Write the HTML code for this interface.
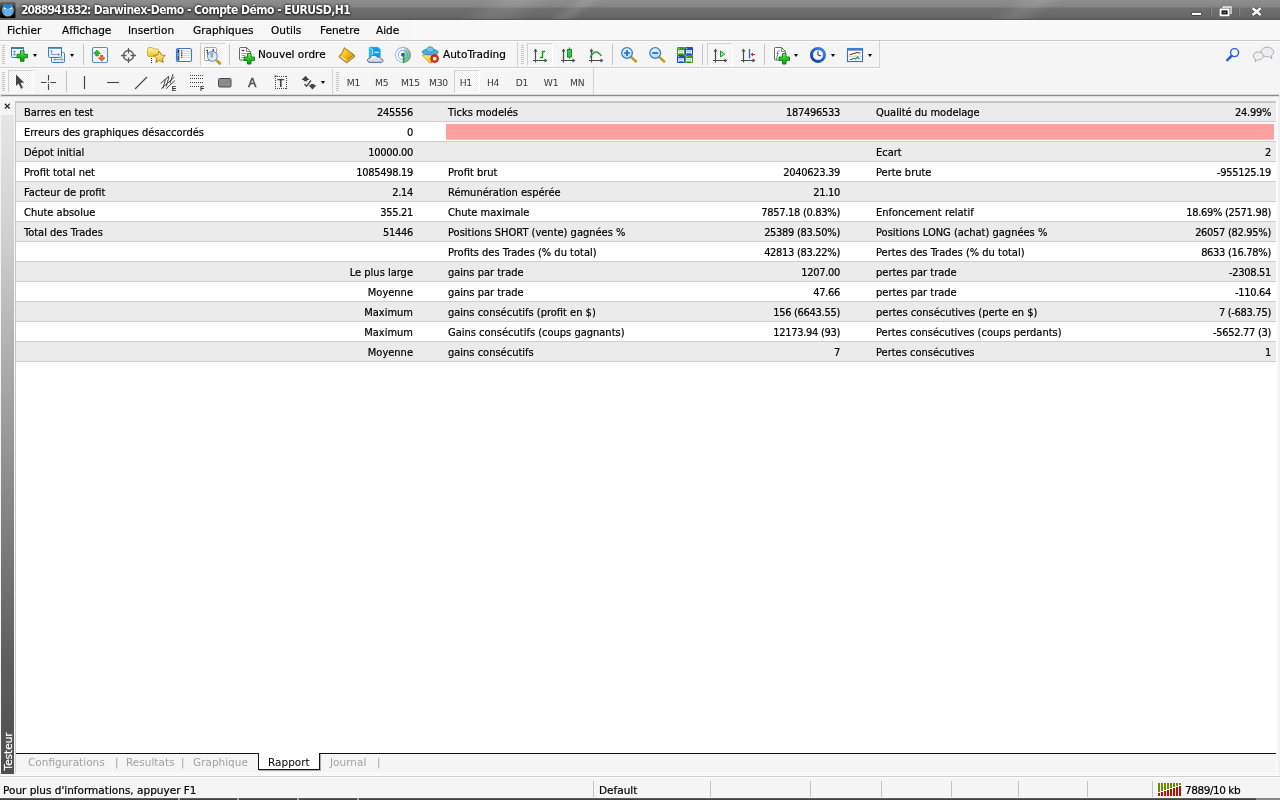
<!DOCTYPE html>
<html><head><meta charset="utf-8"><title>2088941832: Darwinex-Demo - Compte Démo - EURUSD,H1</title>
<style>
*{margin:0;padding:0;box-sizing:border-box}
html,body{width:1280px;height:800px;overflow:hidden;background:#f5f5f5}
body{position:relative;-webkit-text-stroke:.2px currentColor;font-family:"DejaVu Sans Condensed","Liberation Sans",sans-serif;font-size:11px;color:#000}
.abs{position:absolute}
#title{left:0;top:0;width:1280px;height:20px;background:linear-gradient(#8e8e8e 0,#848484 7px,#6f7071 8px,#65666a 18px,#58595a 19px,#58595a 20px)}
.streak{position:absolute;top:0;height:19px;transform:skewX(-55deg);background:linear-gradient(90deg,rgba(255,255,255,0),rgba(255,255,255,.09) 40%,rgba(255,255,255,.09) 60%,rgba(255,255,255,0))}
#title .t{left:21px;top:3px;color:#fff;-webkit-text-stroke:0;font-weight:bold;font-size:12px;letter-spacing:-.62px;text-shadow:0 0 2px #222,0 1px 2px #222,0 0 3px #333;line-height:15px;white-space:pre;font-family:"DejaVu Sans Condensed","Liberation Sans",sans-serif}
#menu{left:0;top:20px;width:1280px;height:20px;background:#f6f6f6}
#menu span{position:absolute;top:3px;line-height:14px;font-family:"DejaVu Sans","Liberation Sans",sans-serif;font-size:10.5px;white-space:pre}
.hl{position:absolute;left:0;width:1280px;height:1px}
.sep{position:absolute;width:1px;background:#c4c4c4}
.grip{position:absolute;width:4px;background:repeating-linear-gradient(#c6c6c6 0,#c6c6c6 1px,transparent 1px,transparent 2px)}
.pressed{position:absolute;background:conic-gradient(#fff 25%,#efefef 0 50%,#fff 0 75%,#efefef 0) 0 0/2px 2px;border:1px solid #fff;border-top-color:#d4d4d4;border-left-color:#cfcfcf}
.dd{position:absolute;width:0;height:0;border-left:2.750px solid transparent;border-right:2.750px solid transparent;border-top:3.200px solid #000}
.tbt{position:absolute;font-family:"DejaVu Sans","Liberation Sans",sans-serif;font-size:10.5px;line-height:14px;white-space:pre;color:#000}
.tf{position:absolute;top:76px;font-family:"DejaVu Sans","Liberation Sans",sans-serif;font-size:9.2px;line-height:14px;color:#383838;white-space:pre;-webkit-text-stroke:0;letter-spacing:-.25px}
#panel{left:0;top:97px;width:1280px;height:677px;background:#f5f5f5}
#strip{left:1px;top:115px;width:13px;height:659px;background:linear-gradient(#e6e6e6 0,#cfcfcf 19%,#a8a8a8 40%,#828282 61.500%,#5e5e5e 82.700%,#4e4e4e 100%)}
#tbl{left:15px;top:101px;width:1261px;height:652px;background:#fff;border-left:1px solid #c8c8c8;border-top:1px solid #c4c4c4}
.row{position:absolute;left:0;width:1260px;height:20px;border-bottom:1px solid #cdcdcd}
.row.g{background:#ebebeb}
.row span{position:absolute;top:4px;line-height:14px;white-space:pre}
.n{letter-spacing:-.3px}
.l1{left:8px}.r1{right:863px}.l2{left:432px}.r2{right:436px}.l3{left:860px}.r3{right:5px}
#tabs{left:16px;top:753px;width:1264px;height:21px}
#tabs span{position:absolute;top:2px;line-height:14px;font-family:"DejaVu Sans","Liberation Sans",sans-serif;font-size:10.5px;color:#a2a2a2;white-space:pre;-webkit-text-stroke:0}
#status span{position:absolute;top:783px;line-height:14px;font-family:"DejaVu Sans","Liberation Sans",sans-serif;font-size:10.5px;white-space:pre}
#root{position:absolute;left:0;top:0;width:1280px;height:800px;will-change:transform;overflow:hidden}
</style></head><body><div id="root">
<div id="title" class="abs"><div class="streak" style="left:470px;width:70px"></div><div class="streak" style="left:560px;width:30px"></div><div class="streak" style="left:1000px;width:50px"></div><span class="abs t"><span style="letter-spacing:-.9px">2088941832:</span><span style="letter-spacing:-.52px"> Darwinex-Demo - Compte Démo - EURUSD,H1</span></span><svg class="abs" style="left:0;top:0" width="20" height="20" viewBox="0 0 20 20"><defs><linearGradient id="ib" x1="0" y1="0" x2="0" y2="1"><stop offset="0" stop-color="#666"/><stop offset=".5" stop-color="#222"/><stop offset="1" stop-color="#000"/></linearGradient></defs>
<rect x="0" y="2" width="15.500" height="16" rx="1.500" fill="url(#ib)"/>
<path d="M4 3.200l1.800 1.600h4.200l1.800-1.600.5 3q1.600 2 1.300 5q-.3 3.500-3.300 4.800l-.8.700-.8-.6-.8.600-.8-.6-.8.600-.8-.700q-3-1.300-3.300-4.800q-.3-3 1.300-5z" fill="#6cb2e4"/>
<path d="M4 3.200l1.800 1.600h4.200l1.800-1.600.6 3.500q-1.500 1.200-2.800 1.500l-1.700.8-1.700-.8q-1.300-.3-2.800-1.500z" fill="#1f84d6"/>
<path d="M3.800 7.200l3 1.500-2.600.3zM12 7.200l-3 1.500 2.600.3z" fill="#fff"/><path d="M3 10.500q.5 2.500 1.800 3q-.3-2-1.800-3zM12.800 10.500q-.5 2.500-1.800 3q.3-2 1.800-3z" fill="#1f84d6"/>
</svg>
<svg class="abs" style="left:1180px;top:0" width="100" height="20" viewBox="1180 0 100 20">
<rect x="1191.600" y="12.300" width="10" height="3.200" rx=".6" fill="#fff" stroke="#333" stroke-width=".9"/>
<path d="M1210.800 6.500v9M1238.800 6.500v9" stroke="#585858" stroke-width=".8"/><path d="M1211.600 6.500v9M1239.600 6.500v9" stroke="#909090" stroke-width=".8"/>
<rect x="1223.400" y="7.100" width="7.500" height="6.200" fill="#3a3a3a" stroke="#f2f2f2" stroke-width="1.500"/><rect x="1219" y="8" width="11.200" height="9" fill="#3a3a3a"/>
<rect x="1220.500" y="9.400" width="8.100" height="6" fill="#1a1a1a" stroke="#fff" stroke-width="2"/><rect x="1223.300" y="12" width="2.600" height="1" fill="#8a8a8a"/>
<path d="M1252.600 8.200l8 6.800M1260.600 8.200l-8 6.800" stroke="#3a3a3a" stroke-width="4" stroke-opacity=".85"/><path d="M1252.600 8.200l8 6.800M1260.600 8.200l-8 6.800" stroke="#fff" stroke-width="2.600"/>
</svg></div>
<div id="menu" class="abs">
<span style="left:7px">Fichier</span><span style="left:62px">Affichage</span><span style="left:128px">Insertion</span><span style="left:193px">Graphiques</span><span style="left:271px">Outils</span><span style="left:320px">Fenetre</span><span style="left:376px">Aide</span>
</div>
<div class="hl" style="top:20px;background:#fdfdfd"></div><div class="abs" style="left:411px;top:21px;width:869px;height:19px;background:#f8f8f8"></div><div class="hl" style="top:40px;background:#cacaca"></div><div class="hl" style="top:41px;background:#fdfdfd"></div>
<div class="hl" style="top:67px;width:880px;background:#d2d2d2"></div><div class="hl" style="top:68px;width:880px;background:#fdfdfd"></div>
<div class="hl" style="top:94px;background:#dadada"></div><div class="hl" style="top:95px;left:1px;width:1278px;background:#8c8c8c"></div>
<div class="hl" style="top:96px;background:#dedede"></div>
<!--TB1S-->
<div class="grip" style="left:2px;top:45px;height:20px;width:3px"></div>
<div class="grip" style="left:521px;top:45px;height:20px;width:3px"></div>
<div class="sep" style="left:83px;top:44px;height:21px"></div>
<div class="sep" style="left:229px;top:44px;height:21px"></div>
<div class="sep" style="left:517px;top:42px;height:25px;background:#d4d4d4"></div>
<div class="sep" style="left:612px;top:44px;height:21px"></div>
<div class="sep" style="left:702px;top:44px;height:21px"></div>
<div class="sep" style="left:764px;top:44px;height:21px"></div>
<div class="sep" style="left:879px;top:41px;height:27px;background:#d4d4d4"></div>
<div class="pressed" style="left:200px;top:43px;width:26px;height:23px"></div>
<div class="pressed" style="left:527px;top:43px;width:26px;height:23px"></div>
<div class="pressed" style="left:707px;top:43px;width:26px;height:23px"></div>
<div class="dd" style="left:33px;top:54px"></div><div class="dd" style="left:70px;top:54px"></div>
<div class="dd" style="left:794px;top:54px"></div><div class="dd" style="left:831px;top:54px"></div><div class="dd" style="left:868px;top:54px"></div>
<span class="tbt" style="left:258px;top:47px">Nouvel ordre</span>
<span class="tbt" style="left:443px;top:47px">AutoTrading</span>
<svg class="abs" style="left:0;top:40px" width="1280" height="28" viewBox="0 40 1280 28">
<defs>
<linearGradient id="gG" x1="0" y1="0" x2="0" y2="1"><stop offset="0" stop-color="#7df07d"/><stop offset=".5" stop-color="#22c522"/><stop offset="1" stop-color="#0c9a0c"/></linearGradient>
<linearGradient id="gY" x1="0" y1="0" x2="0" y2="1"><stop offset="0" stop-color="#fff6b0"/><stop offset="1" stop-color="#f0c030"/></linearGradient>
<linearGradient id="gGold" x1="0" y1="0" x2="1" y2="1"><stop offset="0" stop-color="#ffe870"/><stop offset=".45" stop-color="#f2c420"/><stop offset="1" stop-color="#c8840a"/></linearGradient>
<linearGradient id="gW" x1="0" y1="0" x2="0" y2="1"><stop offset="0" stop-color="#ffffff"/><stop offset="1" stop-color="#dfeaf6"/></linearGradient>
<linearGradient id="gLens" x1="0" y1="0" x2="0" y2="1"><stop offset="0" stop-color="#e6f3fc"/><stop offset="1" stop-color="#b8d8f2"/></linearGradient>
<linearGradient id="gCloud" x1="0" y1="0" x2="0" y2="1"><stop offset="0" stop-color="#ffffff"/><stop offset="1" stop-color="#bccadf"/></linearGradient><linearGradient id="gSig" x1="0" y1="0" x2="1" y2="1"><stop offset="0" stop-color="#d4ecd4"/><stop offset="1" stop-color="#4cac4c"/></linearGradient><linearGradient id="gY2" x1="0" y1="0" x2="1" y2="1"><stop offset="0" stop-color="#fff27a"/><stop offset="1" stop-color="#f0b416"/></linearGradient>
<linearGradient id="gClk" x1="1" y1="0" x2="0" y2="1"><stop offset="0" stop-color="#3a8af0"/><stop offset="1" stop-color="#0a389c"/></linearGradient>
<path id="plus" d="M4 .5h3.5v3.5h3.500v3.500h-3.500v3.500h-3.500v-3.500h-3.500v-3.500h3.500z" fill="url(#gG)" stroke="#0a7d0a" stroke-width=".9" stroke-linejoin="round"/>
<g id="axes" fill="none" stroke="#4a4a4a" stroke-width="1.2"><path d="M2.500 2v12.500M0 12.500h13"/><path d="M2.500 .5l-2 3h4zM14.500 12.500l-3-2v4z" fill="#4a4a4a" stroke="none"/></g>
</defs>
<!-- 1 new chart -->
<rect x="11.500" y="47.500" width="12" height="10" rx="1" fill="url(#gW)" stroke="#3b7dc4"/><rect x="11" y="47" width="13" height="2" fill="#3b7dc4"/>
<path d="M14.500 50.500v5M13 52l1.500-1.500 1.500 1.500M13 54l1.500 1.500 1.500-1.500" fill="none" stroke="#7d9cc0" stroke-width=".9"/>
<use href="#plus" x="16.500" y="50.300"/>
<!-- 2 profiles -->
<rect x="51.500" y="52.500" width="13" height="10" rx="1" fill="url(#gW)" stroke="#3b7dc4"/>
<path d="M54 59.500h9M55.500 58l-1.500 1.500 1.500 1.500M61.500 58l1.500 1.500-1.500 1.500" fill="none" stroke="#7d9cc0" stroke-width=".9"/>
<rect x="48.500" y="47.500" width="13" height="10" rx="1" fill="url(#gW)" stroke="#3b7dc4"/><rect x="48" y="47" width="14" height="1.800" fill="#3b7dc4"/>
<path d="M51.500 50v4.500M50 51.500l1.500-1.500 1.500 1.500M51.500 54.500h8M58 53l1.500 1.500-1.500 1.500" fill="none" stroke="#7d9cc0" stroke-width=".9"/>
<!-- 3 market watch -->
<rect x="92.500" y="47.500" width="15" height="15" rx="1.500" fill="#fff" stroke="#4a8fd8" stroke-width="1.200"/>
<path d="M101 50.500h5M101 52.500h5M95 58.500h3M95 60.500h4" stroke="#dcdcdc" stroke-width=".8"/>
<path d="M97 50l3.300 3.500h-2v2.500h-2.600v-2.500h-2z" fill="#2fbf2f" stroke="#0e8a0e" stroke-width=".7"/>
<path d="M101.700 61.300l-3.300-3.500h2v-2.500h2.600v2.500h2z" fill="#f26a3a" stroke="#c8401a" stroke-width=".7"/>
<!-- 4 crosshair -->
<g fill="none" stroke="#5a5a5a" stroke-width="1.300"><circle cx="128.500" cy="55.500" r="5"/><path d="M128.500 48v5.500M128.500 57.500v5.500M121 55.500h5.500M130.500 55.500h5.500"/></g>
<!-- 5 navigator -->
<path d="M147.500 49.500q0-2 2-2h2q1.500 0 2 1.500h3.500q1.500 0 1.500 1.500v4.500q0 1.500-1.500 1.500h-8q-1.500 0-1.500-1.500z" fill="url(#gY)" stroke="#cfa830" stroke-width=".9"/>
<path d="M151.500 58v6" stroke="#222" stroke-dasharray="1 1"/>
<path d="M159.500 51.200l1.750 3.800 4.100.5-3 2.850.8 4.100-3.650-2-3.650 2 .8-4.100-3-2.850 4.100-.5z" fill="url(#gY)" stroke="#a87a08" stroke-width=".9" stroke-linejoin="round"/>
<!-- 6 terminal -->
<rect x="176.500" y="48.500" width="15" height="13" rx="1.500" fill="#fff" stroke="#3a7cd0" stroke-width="1.100"/>
<rect x="177" y="49" width="2.500" height="12" fill="#5a96e0"/><rect x="177.800" y="50" width="1.200" height="2.500" fill="#123"/><rect x="177.800" y="56" width="1.200" height="4" fill="#456"/>
<path d="M181 51.500h10M181 53.500h10M181 55.500h10M181 57.500h10" stroke="#c4d8f4" stroke-width=".9"/>
<rect x="181" y="50" width="1.300" height="1.300" fill="#e02020"/><rect x="181" y="52.300" width="1.300" height="1.300" fill="#222"/><rect x="181" y="54.500" width="1.300" height="1.300" fill="#222"/><rect x="181" y="56.700" width="1.300" height="1.300" fill="#e02020"/>
<!-- 7 tester -->
<rect x="204.500" y="47.500" width="12" height="13" rx="1" fill="#fff" stroke="#aca392"/>
<path d="M207.500 49.500v6M206 50.500h1.500M207.500 53.500h1.500M213.500 49v6M212 50h1.500M213.500 52.500h1.500" stroke="#555" stroke-width="1" fill="none"/>
<circle cx="212.400" cy="56.300" r="4.900" fill="#dcecf8" fill-opacity=".9" stroke="#5c98e0" stroke-width="1.100"/>
<rect x="210.300" y="52.600" width="2.800" height="5" fill="#a2aab2"/>
<path d="M216.600 60.200l4 4" stroke="#c4960e" stroke-width="2.800"/>
<!-- 8 new order -->
<path d="M239.500 48.500q0-1 1-1h6l4 4v7.500q0 1-1 1h-9q-1 0-1-1z" fill="#fdfdfd" stroke="#666"/><path d="M246.500 47.500v4h4" fill="none" stroke="#666" stroke-width=".8"/>
<path d="M241.500 50.500h3" stroke="#555" stroke-width="1.400"/><path d="M241.500 53.500h6M241.500 55.500h4M241.500 57.500h2.500" stroke="#999" stroke-width=".9"/>
<use href="#plus" x="243.500" y="53"/>
<!-- 9 book -->
<path d="M344.400 47.800l9.900 7.400.3 1.700-7.800 6-7.600-5.600q-.5-1 .6-1.800q3.200-3 4.600-7.700z" fill="#d2b060" stroke="#9a660a" stroke-width=".8" stroke-linejoin="round"/>
<path d="M344.600 48.100l9 6.700-7 5.800-6.800-4.600q3.200-3.400 4.800-7.900z" fill="url(#gGold)" stroke="#a8700c" stroke-width=".7" stroke-linejoin="round"/>
<path d="M340.400 56.400l6.200 4.100" stroke="#fff2a8" stroke-width="1.100"/>
<!-- 10 cloud server -->
<path d="M369.300 47.300h8.500l2.400 2v8.200h-10.900z" fill="#0c9ef8" stroke="#0a7cdc" stroke-width=".5"/><path d="M369.300 47.300l3.200 2.200v8h-3.200z" fill="#30b8ff"/>
<path d="M369.600 47.600l3 2v7" stroke="#e8f6ff" stroke-width=".7" fill="none"/><path d="M374.300 52.300h4.600" stroke="#d8f0ff" stroke-width="1.200"/>
<path d="M370.300 62.400C368.300 62.400 367.300 61.200 367.500 59.900C367.700 58.600 368.900 58 370.100 58.200C370.300 56.400 372.200 55.200 374.300 55.400C376 55.500 377.200 56.400 377.700 57.500C378.600 56.900 380 57 380.700 57.900C381 58.300 381.100 58.700 381.100 59C382.300 59 383.100 59.800 383 60.800C382.900 61.800 382 62.400 381 62.400Z" fill="url(#gCloud)" stroke="#3e5c9c" stroke-width=".9"/>
<!-- 11 signal -->
<circle cx="402.900" cy="54.900" r="8" fill="#fcfdff"/>
<path d="M402.900 54.900l1.800-7.800a8 8 0 0 1-1.800 15.800z" fill="url(#gSig)"/>
<g fill="none"><circle cx="402.900" cy="54.900" r="7.500" stroke="#5a86e0" stroke-opacity=".55" stroke-width="1.100"/><circle cx="402.900" cy="54.900" r="4.600" stroke="#5a86e0" stroke-opacity=".6" stroke-width="1.200"/></g>
<path d="M403.600 55v7.800" stroke="#1fa01f" stroke-width="1.500"/><circle cx="402.900" cy="54.700" r="1.900" fill="#2458d8"/>
<!-- 12 autotrading -->
<path d="M422.300 55l15.200-1.200-6.300 9.200h-1.600z" fill="url(#gY2)" stroke="#c89010" stroke-width=".8" stroke-linejoin="round"/>
<ellipse cx="430.100" cy="52" rx="8" ry="2.900" fill="#52aee0" stroke="#1c80b4" stroke-width=".8"/>
<path d="M426.300 51.500q0-4.700 3.800-4.700t3.800 4.700q-3.800 1.400-7.600 0z" fill="#74c2ee" stroke="#1c80b4" stroke-width=".7"/>
<circle cx="434.600" cy="58.600" r="3.900" fill="#e42a0c" stroke="#b41400" stroke-width=".8"/><rect x="433" y="57" width="3.300" height="3.300" fill="#fff"/>
<!-- bar chart -->
<use href="#axes" x="533" y="48"/><path d="M542.500 51.500h2.500M542.500 51v7M540 57.500h2.500" stroke="#1a9a1a" stroke-width="1.400" fill="none"/>
<!-- candle -->
<use href="#axes" x="561" y="48"/><path d="M569.500 47.500v11" stroke="#0f8a1f" stroke-width="1.200"/><rect x="567.500" y="49.500" width="4" height="7.500" fill="#2ecc40" stroke="#0f8a1f" stroke-width=".9"/>
<!-- line -->
<use href="#axes" x="589" y="48"/><path d="M590 57.500q3-5.500 6-5.500q2.500 0 5.500 4" fill="none" stroke="#2a9a3a" stroke-width="1.400"/>
<!-- zoom in -->
<path d="M631 57l5 4.500" stroke="#c89a18" stroke-width="2.500" stroke-linecap="round"/><circle cx="627" cy="53" r="5.400" fill="url(#gLens)" stroke="#3a80c8" stroke-width="1.300"/><path d="M624 53h6M627 50v6" stroke="#2a6ab8" stroke-width="1.700"/>
<!-- zoom out -->
<path d="M659.200 57l5 4.500" stroke="#c89a18" stroke-width="2.500" stroke-linecap="round"/><circle cx="655.200" cy="53" r="5.400" fill="url(#gLens)" stroke="#3a80c8" stroke-width="1.300"/><path d="M652.200 53h6" stroke="#2a6ab8" stroke-width="1.700"/>
<!-- tile -->
<rect x="677" y="47" width="8" height="8" rx="1" fill="#3c9c14"/><rect x="678.2" y="50.2" width="5.700" height="3.700" fill="#fff"/><rect x="679" y="51.3" width="4" height=".9" fill="#8ccc70"/><rect x="679" y="53.2" width="4" height=".7" fill="#3c9c14"/><rect x="678.2" y="48.2" width="1" height="1" fill="#e8f0e8"/><rect x="685" y="47" width="8" height="8" rx="1" fill="#1c4ccc"/><rect x="686.2" y="50.2" width="5.700" height="3.700" fill="#fff"/><rect x="687" y="51.3" width="4" height=".9" fill="#7c9cec"/><rect x="687" y="53.2" width="4" height=".7" fill="#1c4ccc"/><rect x="686.2" y="48.2" width="1" height="1" fill="#e8f0e8"/><rect x="677" y="55" width="8" height="8" rx="1" fill="#1c4ccc"/><rect x="678.2" y="58.2" width="5.700" height="3.700" fill="#fff"/><rect x="679" y="59.3" width="4" height=".9" fill="#7c9cec"/><rect x="679" y="61.2" width="4" height=".7" fill="#1c4ccc"/><rect x="678.2" y="56.2" width="1" height="1" fill="#e8f0e8"/><rect x="685" y="55" width="8" height="8" rx="1" fill="#3c9c14"/><rect x="686.2" y="58.2" width="5.700" height="3.700" fill="#fff"/><rect x="687" y="59.3" width="4" height=".9" fill="#8ccc70"/><rect x="687" y="61.2" width="4" height=".7" fill="#3c9c14"/><rect x="686.2" y="56.2" width="1" height="1" fill="#e8f0e8"/>
<!-- autoscroll -->
<use href="#axes" x="713" y="48"/><path d="M720.500 51l4.200 3-4.200 3z" fill="#a8eaa8" stroke="#1a9a1a" stroke-width="1"/>
<!-- shift -->
<use href="#axes" x="741" y="48"/><path d="M749.500 49v9.500" stroke="#2a6ab8" stroke-width="1.300"/><path d="M751.500 54.500h3.500" stroke="#d03010" stroke-width="1.100"/><path d="M750.500 54.500l2.500-2v4z" fill="#d03010"/>
<!-- indicators -->
<path d="M774.500 48.500q0-1 1-1h6l4 4v7.500q0 1-1 1h-9q-1 0-1-1z" fill="#fdfdfd" stroke="#666"/><path d="M781.500 47.500v4h4" fill="none" stroke="#666" stroke-width=".8"/>
<text x="776" y="57.500" font-family="'Liberation Serif',serif" font-size="9.500" font-style="italic" fill="#555">f</text>
<use href="#plus" x="778.500" y="53"/>
<!-- clock -->
<circle cx="818" cy="54.900" r="6.600" fill="#f4f6fa" stroke="url(#gClk)" stroke-width="2.800"/>
<path d="M818 55v-3.500M818 55l3 1" stroke="#333" stroke-width="1.100" fill="none"/><path d="M818 50.200v.8M818 59v.8M813.200 55h.8M822 55h.8" stroke="#888" stroke-width=".9"/>
<!-- templates -->
<rect x="847.500" y="48.500" width="15" height="13" fill="#fff" stroke="#2f74c4" stroke-width="1.100"/><rect x="847" y="48" width="16" height="2.600" fill="#3a7fd0"/><path d="M848 56.200h14" stroke="#9ab8e0" stroke-width=".8"/>
<path d="M849.500 54.500h2l1.500-1h2l1.500-1h1.500l1 .5h1.500" fill="none" stroke="#a83018" stroke-width="1.100"/><path d="M850 59.500h1.500l1.500-1h1.500l1 .5 2-2 2 2" fill="none" stroke="#2a8a3a" stroke-width="1.100"/>
<!-- search -->
<path d="M1231.500 56l-4.300 4.200" stroke="#2a5fe0" stroke-width="2.500" stroke-linecap="round"/><circle cx="1234.600" cy="52.600" r="4" fill="none" stroke="#2a5fe0" stroke-width="1.400"/>
<!-- chat -->
<path d="M1261 52a6.300 4.800 0 1 1 10.500 3.600l.3 3-2.500-2a6.300 4.800 0 0 1-8.300-4.600z" fill="#ececf2" stroke="#a4a4a8" stroke-width=".9"/>
<path d="M1253.300 56a5 4 0 1 1 4.200 3.900l-2.300 2 .3-2.700a5 4 0 0 1-2.200-3.200z" fill="#f0f0f4" stroke="#a4a4a8" stroke-width=".9"/>
</svg>
<!--TB1E-->
<!--TB2S-->
<div class="grip" style="left:2px;top:72px;height:20px;width:3px"></div>
<div class="grip" style="left:336px;top:72px;height:20px;width:3px"></div>
<div class="sep" style="left:66px;top:71px;height:21px"></div>
<div class="sep" style="left:332px;top:69px;height:26px;background:#d4d4d4"></div>
<div class="sep" style="left:593px;top:68px;height:27px;background:#d4d4d4"></div>
<div class="pressed" style="left:8px;top:70px;width:26px;height:23px"></div>
<div class="pressed" style="left:454px;top:70px;width:26px;height:23px"></div>
<div class="dd" style="left:321px;top:81px"></div>
<span class="tf" style="left:346.8px">M1</span><span class="tf" style="left:375px">M5</span><span class="tf" style="left:400.9px">M15</span><span class="tf" style="left:429.1px">M30</span><span class="tf" style="left:459.7px">H1</span><span class="tf" style="left:486.9px">H4</span><span class="tf" style="left:515.8px">D1</span><span class="tf" style="left:543.8px">W1</span><span class="tf" style="left:570.1px">MN</span>
<svg class="abs" style="left:0;top:68px" width="640" height="27" viewBox="0 68 640 27">
<!-- cursor -->
<path d="M16 74.500v11.500l2.700-2.500 2.300 5.300 1.900-.9-2.300-5.100h3.600z" fill="#444"/>
<!-- crosshair -->
<path d="M48.500 75v5.500M48.500 84v6M41 82.500h5.500M50.500 82.500h5.500" stroke="#444" stroke-width="1.100"/><rect x="48" y="82" width="1" height="1" fill="#444"/>
<!-- vline hline trend -->
<path d="M84.500 76v13" stroke="#444" stroke-width="1.200"/><path d="M107 82.500h12" stroke="#444" stroke-width="1.100"/><path d="M135 89l12-12" stroke="#444" stroke-width="1.100"/>
<!-- channel -->
<g stroke="#444" stroke-width="1" fill="none"><path d="M160.600 83.400L169 76M161.500 88.500L174.500 77M166 88.800L175 80.500M163 88.500L165.500 79M166.300 86.500L168.800 77M170 83.500L173 74"/></g>
<text x="171.800" y="91" font-family="'Liberation Sans',sans-serif" font-size="7" font-weight="bold" fill="#333">E</text>
<!-- fibo -->
<g stroke="#444" stroke-width="1" stroke-dasharray="1 1"><path d="M190 75.500h13M190 78.500h13M190 82.500h13M190 86.500h9"/></g>
<text x="200" y="91" font-family="'Liberation Sans',sans-serif" font-size="7" font-weight="bold" fill="#333">F</text>
<!-- rect -->
<rect x="218.500" y="78.500" width="12.500" height="8.500" rx="1.200" fill="#8a8a8a" stroke="#4c4c4c"/>
<!-- A -->
<text x="248.300" y="87" font-family="'Liberation Sans',sans-serif" font-size="12" fill="#505050" stroke="#505050" stroke-width=".6">A</text>
<!-- T label -->
<path d="M275 76.500h12M275 88.500h12M275.500 76v13M286.500 76v13" fill="none" stroke="#444" stroke-dasharray="1 1"/><rect x="274.500" y="75.500" width="2" height="1.500" fill="#444"/>
<text x="277.300" y="87" font-family="'Liberation Sans',sans-serif" font-size="11.500" font-weight="bold" fill="#444">T</text>
<!-- arrows -->
<path d="M305.500 75.800l4 4.200h-8zM303.800 80h3.400v1.300h-3.400z" fill="#444"/><path d="M312.500 89.400l-4-4.200h8zM310.800 83.900h3.400v1.300h-3.400z" fill="#444"/><path d="M304.500 84l2 2.200 4.500-5.700" stroke="#444" stroke-width="1.300" fill="none"/>
</svg>
<!--TB2E-->
<div id="panel" class="abs"></div>
<div id="strip" class="abs"></div><div class="abs" style="left:1276px;top:101px;width:2px;height:673px;background:#fbfbfb"></div><div class="abs" style="left:1278px;top:97px;width:2px;height:677px;background:#f1f1f1"></div>
<div id="tbl" class="abs">
<div class="row g" style="top:0px"><span class="l1">Barres en test</span><span class="r1 n">245556</span><span class="l2">Ticks modelés</span><span class="r2 n">187496533</span><span class="l3">Qualité du modelage</span><span class="r3 n">24.99%</span></div>
<div class="row" style="top:20px"><span class="l1">Erreurs des graphiques désaccordés</span><span class="r1 n">0</span><div class="abs" style="left:430px;top:2px;width:828px;height:16px;background:#fda0a0;border-bottom:1px solid #c9cbd2"></div></div>
<div class="row g" style="top:40px"><span class="l1">Dépot initial</span><span class="r1 n">10000.00</span><span class="l3">Ecart</span><span class="r3 n">2</span></div>
<div class="row" style="top:60px"><span class="l1">Profit total net</span><span class="r1 n">1085498.19</span><span class="l2">Profit brut</span><span class="r2 n">2040623.39</span><span class="l3">Perte brute</span><span class="r3 n">-955125.19</span></div>
<div class="row g" style="top:80px"><span class="l1">Facteur de profit</span><span class="r1 n">2.14</span><span class="l2">Rémunération espérée</span><span class="r2 n">21.10</span></div>
<div class="row" style="top:100px"><span class="l1">Chute absolue</span><span class="r1 n">355.21</span><span class="l2">Chute maximale</span><span class="r2 n">7857.18 (0.83%)</span><span class="l3">Enfoncement relatif</span><span class="r3 n">18.69% (2571.98)</span></div>
<div class="row g" style="top:120px"><span class="l1">Total des Trades</span><span class="r1 n">51446</span><span class="l2">Positions SHORT (vente) gagnées %</span><span class="r2 n">25389 (83.50%)</span><span class="l3">Positions LONG (achat) gagnées %</span><span class="r3 n">26057 (82.95%)</span></div>
<div class="row" style="top:140px"><span class="l2">Profits des Trades (% du total)</span><span class="r2 n">42813 (83.22%)</span><span class="l3">Pertes des Trades (% du total)</span><span class="r3 n">8633 (16.78%)</span></div>
<div class="row g" style="top:160px"><span class="r1">Le plus large</span><span class="l2">gains par trade</span><span class="r2 n">1207.00</span><span class="l3">pertes par trade</span><span class="r3 n">-2308.51</span></div>
<div class="row" style="top:180px"><span class="r1">Moyenne</span><span class="l2">gains par trade</span><span class="r2 n">47.66</span><span class="l3">pertes par trade</span><span class="r3 n">-110.64</span></div>
<div class="row g" style="top:200px"><span class="r1">Maximum</span><span class="l2">gains consécutifs (profit en $)</span><span class="r2 n">156 (6643.55)</span><span class="l3">pertes consécutives (perte en $)</span><span class="r3 n">7 (-683.75)</span></div>
<div class="row" style="top:220px"><span class="r1">Maximum</span><span class="l2">Gains consécutifs (coups gagnants)</span><span class="r2 n">12173.94 (93)</span><span class="l3">Pertes consécutives (coups perdants)</span><span class="r3 n">-5652.77 (3)</span></div>
<div class="row g" style="top:240px"><span class="r1">Moyenne</span><span class="l2">gains consécutifs</span><span class="r2 n">7</span><span class="l3">Pertes consécutives</span><span class="r3 n">1</span></div>
<div class="abs" style="left:0;top:0;width:1260px;height:1px;background:#c8c8c8"></div></div>
<!--RESTS-->
<div class="abs" style="left:3.5px;top:102.300px;font:bold 9px/9px 'DejaVu Sans','Liberation Sans',sans-serif;color:#222">×</div>
<div class="abs" style="left:15px;top:753px;width:1px;height:20px;background:#d0d0d0"></div>
<div id="tabs" class="abs">
<div class="abs" style="left:0;top:0;width:243px;height:1px;background:#111"></div>
<div class="abs" style="left:303px;top:0;width:957px;height:1px;background:#111"></div><div class="abs" style="left:0;top:20px;width:1262px;height:1px;background:#fcfcfc"></div>
<div class="abs" style="left:242px;top:0;width:62px;height:17px;background:#fff;border:1px solid #111;border-top:none;box-shadow:1px 1px 0 #aaa"></div>
<span style="left:12px">Configurations</span><span style="left:99px">|</span><span style="left:110px">Resultats</span><span style="left:165px">|</span><span style="left:177px">Graphique</span><span style="left:252px;color:#000">Rapport</span><span style="left:314px">Journal</span><span style="left:361px">|</span>
</div>
<div class="abs" style="left:1px;top:699px;width:13px;height:92px"><span style="position:absolute;left:-19px;top:39px;width:52px;transform:rotate(-90deg);color:#fff;font:10.500px/13px 'DejaVu Sans','Liberation Sans',sans-serif;white-space:pre">Testeur</span></div>
<div class="hl" style="top:775px;background:#fcfcfc"></div><div class="hl" style="top:776px;background:#cfcfcf"></div><div class="hl" style="top:777px;background:#fcfcfc"></div>
<div id="status">
<span style="left:3px">Pour plus d'informations, appuyer F1</span><span style="left:599px">Default</span><span style="left:1185px;letter-spacing:-.45px">7889/10 kb</span>
<div class="sep" style="left:593px;top:781px;height:16px"></div><div class="sep" style="left:710px;top:781px;height:16px"></div><div class="sep" style="left:810px;top:781px;height:16px"></div><div class="sep" style="left:881px;top:781px;height:16px"></div><div class="sep" style="left:951px;top:781px;height:16px"></div><div class="sep" style="left:1018px;top:781px;height:16px"></div><div class="sep" style="left:1087px;top:781px;height:16px"></div><div class="sep" style="left:1152px;top:781px;height:16px"></div>
<svg class="abs" style="left:1157px;top:782px" width="26" height="14" viewBox="0 0 26 14"><g fill="#6a8a00"><rect x="1" y="1" width="2" height="9"/><rect x="4" y="1" width="2" height="8"/><rect x="7" y="1" width="2" height="7"/><rect x="10" y="1" width="2" height="6"/><rect x="13" y="1" width="2" height="5"/><rect x="16" y="1" width="2" height="4"/><rect x="19" y="1" width="2" height="3"/><rect x="22" y="1" width="2" height="2"/></g><g fill="#b81000"><rect x="1" y="11" width="2" height="3"/><rect x="4" y="10" width="2" height="4"/><rect x="7" y="9" width="2" height="5"/><rect x="10" y="8" width="2" height="6"/><rect x="13" y="7" width="2" height="7"/><rect x="16" y="6" width="2" height="8"/><rect x="19" y="5" width="2" height="9"/><rect x="22" y="4" width="2" height="10"/></g></svg>
</div>
<div class="abs" style="left:0;top:798px;width:1280px;height:2px;background:linear-gradient(#6a6a6a,#333)"></div><div class="abs" style="left:178px;top:798px;width:2px;height:2px;background:#aaa"></div><div class="abs" style="left:237px;top:798px;width:2px;height:2px;background:#aaa"></div><div class="abs" style="left:297px;top:798px;width:2px;height:2px;background:#aaa"></div><div class="abs" style="left:357px;top:798px;width:2px;height:2px;background:#aaa"></div><div class="abs" style="left:1256px;top:798px;width:24px;height:2px;background:#8a8a8a"></div>
<!--RESTE-->
</div></body></html>
